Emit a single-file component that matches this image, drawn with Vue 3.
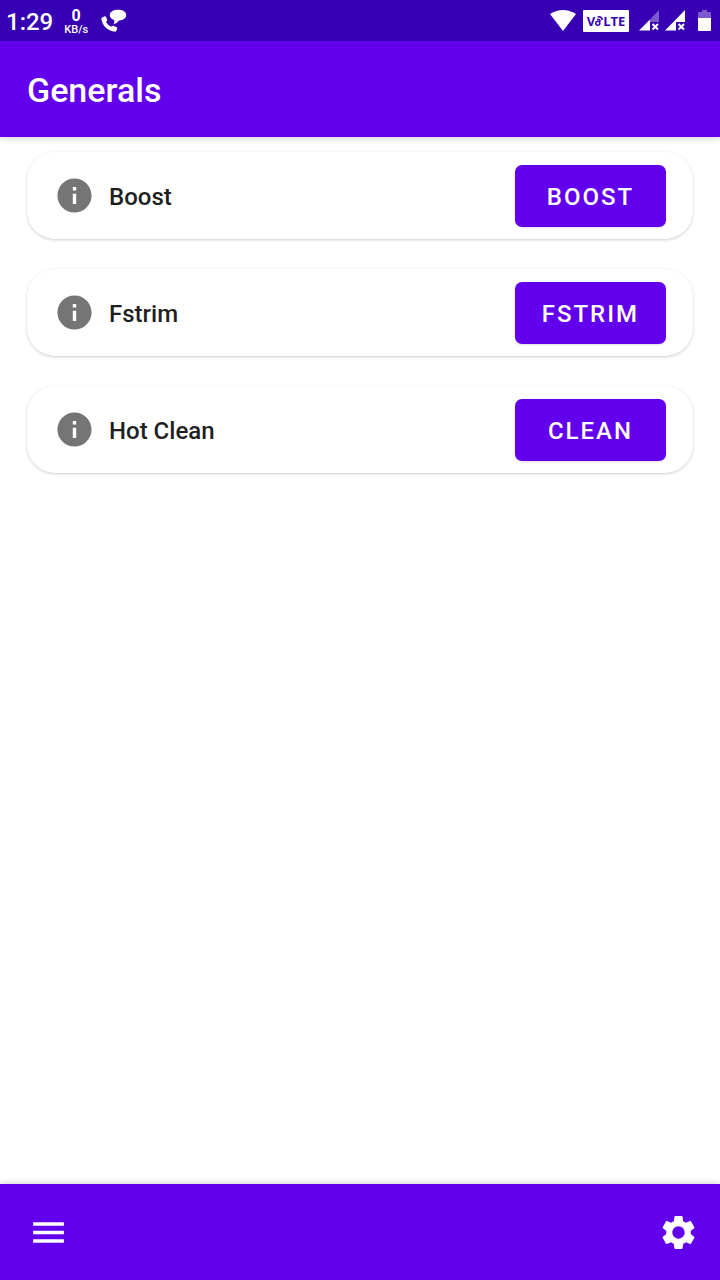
<script setup>
const actions = [
  { id: 'boost', label: 'Boost', button: 'BOOST' },
  { id: 'fstrim', label: 'Fstrim', button: 'FSTRIM' },
  { id: 'clean', label: 'Hot Clean', button: 'CLEAN' }
]
</script>

<template>
  <div class="screen">
    <div class="status">
      <span class="clock">1:29</span>
      <div class="speed">
        <span class="rate">0</span>
        <span class="unit">KB/s</span>
      </div>
      <svg class="call" viewBox="0 0 26 24" aria-hidden="true">
        <path d="M1.2 8.4 3.8 7.2Q4.6 7 5 7.8L6.2 11Q6.4 11.8 5.7 12.3L5 13Q6.8 16 10 17.8L11 17Q11.7 16.5 12.5 16.8L15.6 18.2Q16.4 18.6 16.2 19.4L15.4 21.8Q15 22.8 13.6 22.6C6.8 22 1 16.4.4 10Q.3 8.8 1.2 8.4Z" />
        <path d="M17 .8C22 .8 25.2 2.8 25.2 6S22.2 11.4 18.2 11.4Q15.8 14.6 12.6 15.2 13.8 13 13.2 11C10.6 10.2 8.8 8.6 8.8 6.2 8.8 2.8 12.4.8 17 .8Z" />
      </svg>
      <div class="signals">
        <svg class="wifi" viewBox="0 0 26 21" aria-hidden="true">
          <path d="M0 4Q13-4 26 4L13 21Z" />
        </svg>
        <span class="volte">
          <span>V</span>
          <svg class="wave" viewBox="0 0 8 14" aria-hidden="true">
            <circle cx="2.8" cy="9.3" r="2" />
            <path d="M2 5.5Q4.6 4.8 5.5 7.5M2.6 3Q6.6 2.2 7.4 6" />
          </svg>
          <span>LTE</span>
        </span>
        <svg class="cell" viewBox="0 0 21 21" aria-hidden="true">
          <path class="faint" d="M11 9.5 20 0V12H11Z" />
          <path d="M0 20.5 11 9.5V20.5Z" />
          <path class="cross" d="M13.5 14 19 19.5M19 14 13.5 19.5" />
        </svg>
        <svg class="cell second" viewBox="0 0 21 21" aria-hidden="true">
          <path d="M0 20.5 20 0V12H11V20.5Z" />
          <path class="cross" d="M13.5 14 19 19.5M19 14 13.5 19.5" />
        </svg>
        <svg class="battery" viewBox="0 0 13 22" aria-hidden="true">
          <path class="faint" d="M4 0H9V2H12Q13 2 13 3V8H0V3Q0 2 1 2H4Z" />
          <path d="M0 8H13V20Q13 21 12 21H1Q0 21 0 20Z" />
        </svg>
      </div>
    </div>

    <header class="topbar">
      <h1>Generals</h1>
    </header>

    <main class="list">
      <section v-for="action in actions" :key="action.id" class="card">
        <svg class="icon info" viewBox="0 0 24 24" aria-hidden="true">
          <path d="M12 2C6.48 2 2 6.48 2 12s4.48 10 10 10 10-4.48 10-10S17.52 2 12 2zm1 15h-2v-6h2v6zm0-8h-2V7h2v2z" />
        </svg>
        <h2 :id="action.id">{{ action.label }}</h2>
        <button type="button" class="run" :aria-describedby="action.id">{{ action.button }}</button>
      </section>
    </main>

    <nav class="bottombar">
      <button type="button" class="tool" aria-label="Menu">
        <svg class="icon" viewBox="0 0 24 24" aria-hidden="true">
          <path d="M3 18h18v-2H3v2zm0-5h18v-2H3v2zm0-7v2h18V6H3z" />
        </svg>
      </button>
      <button type="button" class="tool" aria-label="Settings">
        <svg class="icon" viewBox="0 0 24 24" aria-hidden="true">
          <path d="M19.14 12.94c.04-.3.06-.61.06-.94 0-.32-.02-.64-.07-.94l2.03-1.58c.18-.14.23-.41.12-.61l-1.92-3.32c-.12-.22-.37-.29-.59-.22l-2.39.96c-.5-.38-1.03-.7-1.62-.94l-.36-2.54c-.04-.24-.24-.41-.48-.41h-3.84c-.24 0-.43.17-.47.41l-.36 2.54c-.59.24-1.13.57-1.62.94l-2.39-.96c-.22-.08-.47 0-.59.22L2.74 8.87c-.12.21-.08.47.12.61l2.03 1.58c-.05.3-.09.63-.09.94s.02.64.07.94l-2.03 1.58c-.18.14-.23.41-.12.61l1.92 3.32c.12.22.37.29.59.22l2.39-.96c.5.38 1.03.7 1.62.94l.36 2.54c.05.24.24.41.48.41h3.84c.24 0 .44-.17.47-.41l.36-2.54c.59-.24 1.13-.56 1.62-.94l2.39.96c.22.08.47 0 .59-.22l1.92-3.32c.12-.22.07-.47-.12-.61l-2.01-1.58zM12 15.6c-1.98 0-3.6-1.62-3.6-3.6s1.62-3.6 3.6-3.6 3.6 1.62 3.6 3.6-1.62 3.6-3.6 3.6z" />
        </svg>
      </button>
    </nav>
  </div>
</template>

<style>
body {
  margin: 0;
  background: #fff;
}
</style>

<style scoped>
.screen {
  display: flex;
  flex-direction: column;
  min-height: 100vh;
  background: #fff;
  color: #1f1f1f;
  font-family: Roboto, "Liberation Sans", sans-serif;
}

svg {
  display: block;
  flex: none;
  fill: currentColor;
}

.status {
  display: flex;
  align-items: center;
  box-sizing: border-box;
  height: 41px;
  padding: 0 9px 0 6px;
  background: #3700b3;
  color: #fff;
}

.clock {
  font-size: 24px;
  font-weight: 500;
  line-height: 28px;
  padding-top: 2px;
}

.speed {
  display: flex;
  flex-direction: column;
  align-items: center;
  margin-left: 11px;
  padding-top: 2px;
}

.rate {
  font-size: 16px;
  font-weight: 700;
  line-height: 16px;
}

.unit {
  font-size: 11px;
  font-weight: 500;
  line-height: 12px;
}

.call {
  width: 26px;
  height: 24px;
  margin-left: 13px;
}

.signals {
  display: flex;
  align-items: center;
  margin-left: auto;
}

.wifi {
  width: 26px;
  height: 21px;
}

.volte {
  display: flex;
  align-items: center;
  justify-content: center;
  width: 46px;
  height: 22px;
  margin: 0 10px 0 7px;
  border-radius: 1px;
  background: #fff;
  color: #3700b3;
  font: 700 13px/22px "Open Sans", sans-serif;
}

.wave {
  width: 8px;
  height: 14px;
  fill: none;
  stroke: currentColor;
  stroke-width: 1.5;
}

.cell {
  width: 21px;
  height: 21px;
}

.second {
  margin: 0 12px 0 5px;
}

.faint {
  opacity: 0.35;
}

.cross {
  fill: none;
  stroke: currentColor;
  stroke-width: 2;
}

.battery {
  width: 13px;
  height: 22px;
}

.topbar {
  display: flex;
  align-items: center;
  height: 96px;
  padding: 0 27px;
  background: #6200ee;
  color: #fff;
  box-shadow: 0 2px 6px rgba(0, 0, 0, 0.16);
}

h1 {
  margin: 0;
  padding-top: 2px;
  font-size: 34px;
  font-weight: 500;
  line-height: 40px;
}

.list {
  display: flex;
  flex: 1;
  flex-direction: column;
  gap: 30px;
  padding: 15px 27px;
}

.card {
  display: flex;
  align-items: center;
  box-sizing: border-box;
  min-height: 87px;
  padding: 0 27px;
  border-radius: 28px;
  background: #fff;
  box-shadow: 0 1px 3px rgba(0, 0, 0, 0.2);
}

.icon {
  width: 41px;
  height: 41px;
}

.info {
  color: #757575;
}

h2 {
  flex: 1;
  margin: 0 0 0 14px;
  padding-top: 2px;
  font-size: 24px;
  font-weight: 500;
  line-height: 28px;
}

.run {
  min-width: 151px;
  height: 62px;
  padding: 2px 27px 0;
  border: 0;
  border-radius: 7px;
  background: #6200ee;
  color: #fff;
  box-shadow: 0 1px 2px rgba(0, 0, 0, 0.12);
  font: 500 24px/28px Roboto, "Liberation Sans", sans-serif;
  letter-spacing: 2px;
}

.bottombar {
  display: flex;
  align-items: center;
  justify-content: space-between;
  height: 96px;
  padding: 0 21px 0 28px;
  background: #6200ee;
  color: #fff;
  box-shadow: 0 -1px 6px rgba(0, 0, 0, 0.18);
}

.tool {
  padding: 0;
  border: 0;
  background: none;
  color: inherit;
}
</style>
